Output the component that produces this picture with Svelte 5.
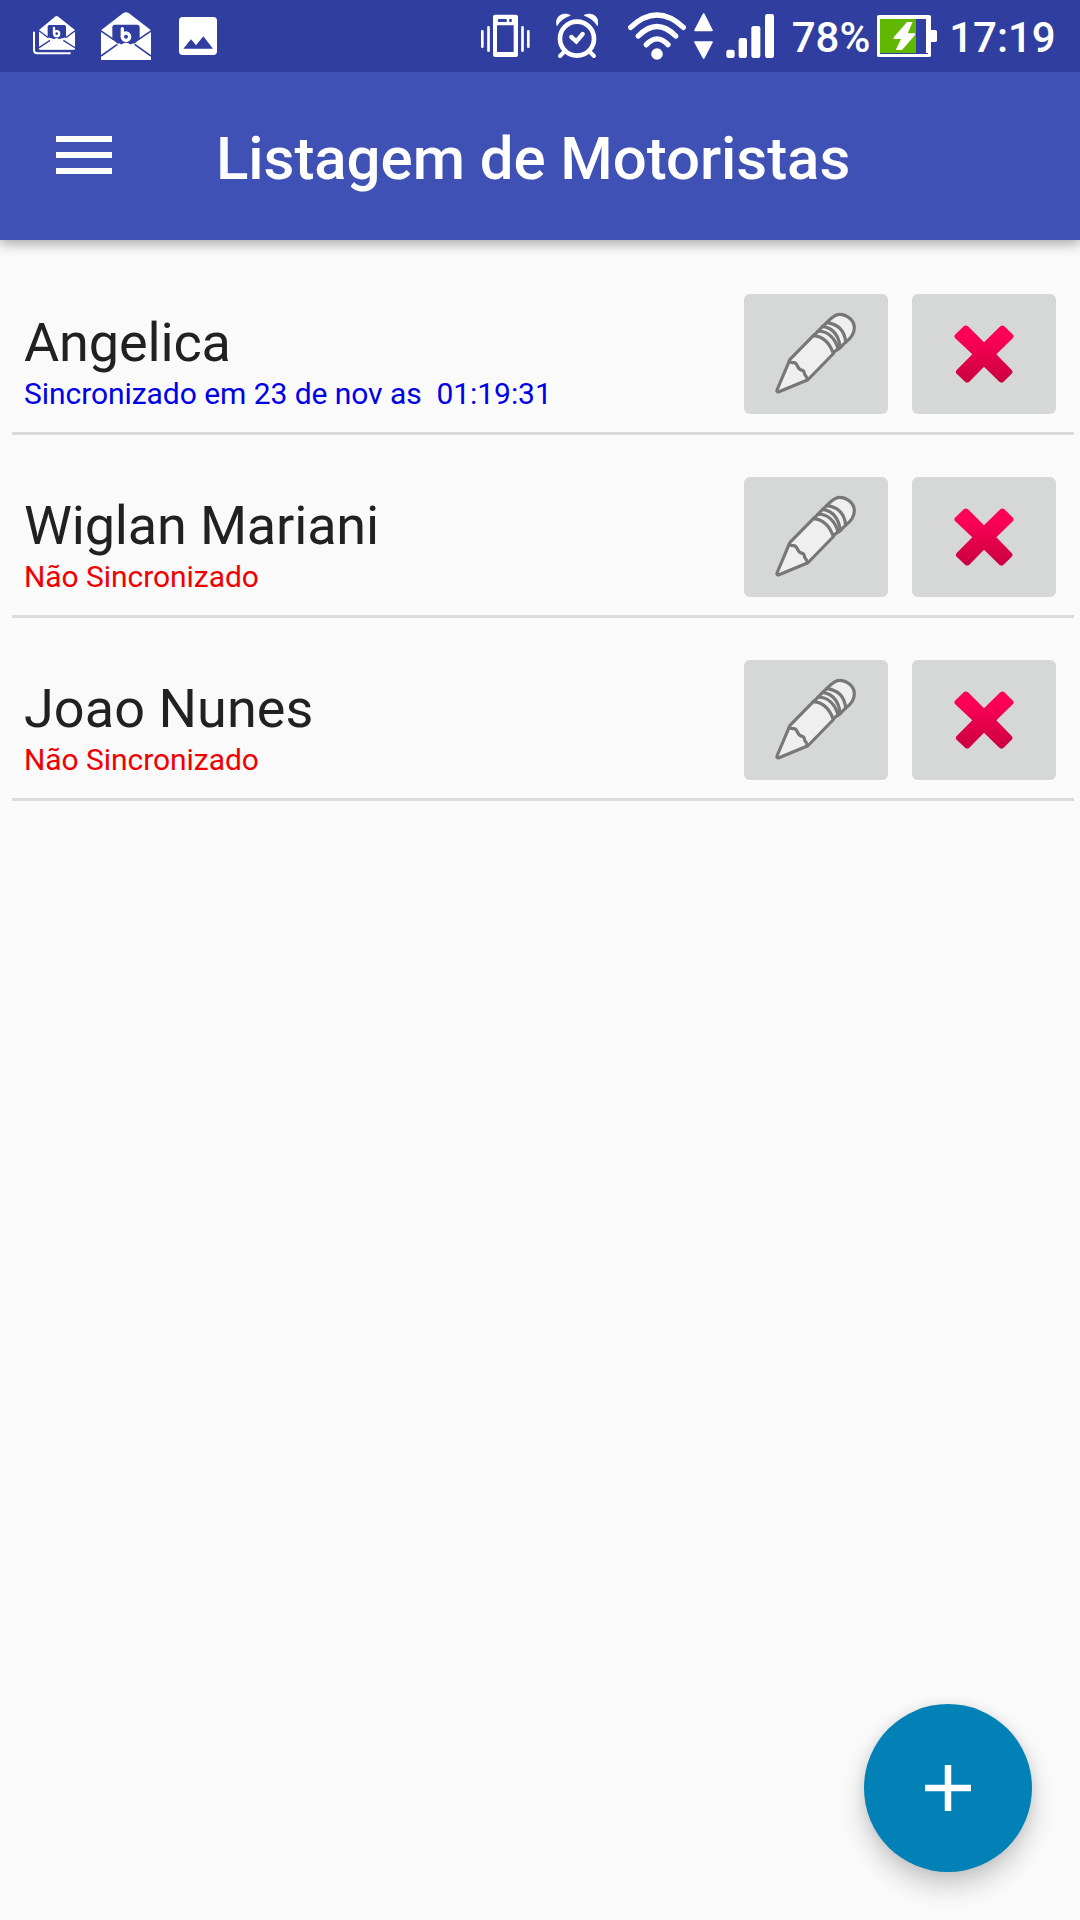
<script>
  const drivers = [
    { name: 'Angelica', status: 'Sincronizado em 23 de nov as\u00a0 01:19:31', synced: true, tracking: -0.14 },
    { name: 'Wiglan Mariani', status: 'Não Sincronizado', synced: false, tracking: -0.17 },
    { name: 'Joao Nunes', status: 'Não Sincronizado', synced: false, tracking: 0.07 },
  ];
</script>

<div class="screen">
  <div class="status-bar">
    <div class="notifications">
      <!-- stacked mail -->
      <svg class="mail-stack" viewBox="99 0 126 216" width="42" height="72">
        <path d="M102 95V150Q102 160 112 160H212" fill="none" stroke="#fff" stroke-width="6" />
        <path d="M117 90L165 50Q170 46 175 50L225 90V148H117Z" fill="#fff" />
        <path d="M143 112V80Q143 75 148 75H193Q198 75 198 80V112L170 119Z" fill="#303f9f" />
        <path d="M115 91L145 113M227 91L197 113M117 143L150 121M225 143L190 121" stroke="#303f9f" stroke-width="4" />
        <path d="M117 149L165 116Q170 112 175 116L225 149Z" fill="#fff" />
        <path d="M162 84V101" stroke="#fff" stroke-width="7" stroke-linecap="round" />
        <circle cx="170" cy="101" r="7.500" fill="none" stroke="#fff" stroke-width="7" />
      </svg>
      <!-- mail -->
      <svg class="mail" viewBox="303 0 150 216" width="50" height="72">
        <path d="M303 91L370 39Q378 34 386 39L453 91V180H303Z" fill="#fff" />
        <path d="M337 118V82Q337 74 345 74H411Q419 74 419 82V118L378 142Z" fill="#303f9f" />
        <path d="M301 92L340 118M455 92L416 118M303 168L352 133M453 168L404 133M338 116L356 130M418 116L400 130" stroke="#303f9f" stroke-width="5" />
        <path d="M303 173L368 131Q378 126 388 131L453 173V180H303Z" fill="#fff" />
        <path d="M367 86V110" stroke="#fff" stroke-width="10" stroke-linecap="round" />
        <circle cx="378" cy="110" r="11" fill="none" stroke="#fff" stroke-width="10" />
      </svg>
      <!-- picture -->
      <svg class="picture" viewBox="537 0 114 216" width="38" height="72">
        <rect x="537" y="51" width="114" height="114" rx="11" fill="#fff" />
        <path d="M550 146L573 118L588 136L610 109L639 146Z" fill="#303f9f" />
      </svg>
    </div>
    <div class="system">
      <!-- vibrate -->
      <svg class="vibrate" viewBox="60 0 150 216" width="50" height="72">
        <path fill-rule="evenodd" fill="#fff" d="M105 44H168Q174 44 174 50V165Q174 171 168 171H105Q99 171 99 165V50Q99 44 105 44ZM111 76V156H161V76ZM117 57Q113 57 113 61.500T117 66H137Q141 66 141 61.500T137 57ZM151 56Q147 56 147 61.500T151 67Q156 67 156 61.500T151 56Z" />
        <path d="M67 94V140M85.500 82V152M187.500 82V152M205 94V140" stroke="#fff" stroke-width="8" stroke-linecap="round" />
      </svg>
      <!-- alarm -->
      <svg class="alarm" viewBox="287 0 126 216" width="42" height="72">
        <circle cx="350" cy="116" r="51" fill="none" stroke="#fff" stroke-width="14" />
        <path d="M290 77C282 52 306 34 330 46Q302 56 290 77ZM411 77C420 52 395 34 371 46Q399 56 411 77Z" fill="#fff" stroke="#fff" stroke-width="2" />
        <path d="M311 156L299 168M389 156L401 168" stroke="#fff" stroke-width="12" stroke-linecap="round" />
        <path d="M333 111L348 124L367 102" fill="none" stroke="#fff" stroke-width="13" stroke-linecap="round" />
      </svg>
      <!-- wifi -->
      <svg class="wifi" viewBox="504 0 174 216" width="58" height="72">
        <g fill="none" stroke="#fff" stroke-width="16" stroke-linecap="round">
          <path d="M512 82Q591 8 670 82" />
          <path d="M535 108Q591 51 647 108" />
          <path d="M559 134Q591 99 624 134" />
        </g>
        <circle cx="591" cy="162" r="17.500" fill="#fff" />
      </svg>
      <!-- data arrows -->
      <svg class="arrows" viewBox="702 0 57 216" width="19" height="72">
        <path d="M731 42L756 91H705ZM705 126H756L731 174Z" fill="#fff" stroke="#fff" stroke-width="5" stroke-linejoin="round" />
      </svg>
      <!-- signal -->
      <svg class="signal" viewBox="798 0 144 216" width="48" height="72">
        <g fill="#fff">
          <rect x="799" y="149" width="25" height="25" rx="7" />
          <rect x="836" y="114" width="25" height="60" rx="7" />
          <rect x="874" y="78" width="27" height="96" rx="7" />
          <rect x="915" y="42" width="27" height="132" rx="7" />
        </g>
      </svg>
      <span class="percent">78%</span>
      <!-- charging battery -->
      <svg class="battery" viewBox="321 0 180 216" width="60" height="72">
        <rect x="325.500" y="49.500" width="153" height="117" rx="1" fill="none" stroke="#fff" stroke-width="9" />
        <rect x="330" y="57" width="108" height="102" fill="#61b800" />
        <rect x="330" y="54" width="144" height="3" fill="#fff" />
        <rect x="468" y="57" width="6" height="102" fill="#fff" />
        <path d="M480 90H496Q501 90 501 95V121Q501 126 496 126H480Z" fill="#fff" />
        <path d="M411 66H428L413 100H435V105L396 150H377L393 117H371V112Z" fill="#fff" />
      </svg>
      <span class="clock">17:19</span>
    </div>
  </div>

  <header>
    <button class="menu" aria-label="Menu"><i></i><i></i><i></i></button>
    <h1>Listagem de Motoristas</h1>
  </header>

  <main>
    {#each drivers as driver}
      <div class="row">
        <div class="info">
          <div class="name" style:letter-spacing="{driver.tracking}px">{driver.name}</div>
          <div class="sync" class:synced={driver.synced}>{driver.status}</div>
        </div>
        <button class="action" aria-label="Editar">
          <svg viewBox="42 42 432 360" width="144" height="120">
            <g fill="#efefef" stroke="#777" stroke-width="9.500" stroke-linejoin="round" stroke-linecap="round">
              <path d="M177 245L141 330Q139 337 147 335L232 300L236 297L309 222L314 214L331 203L347 186C358 178 373 163 373 143C373 121 351 103 328 103Q313 103 290 128L275 142L259 159L250 167L180 238Z" />
              <path d="M177 245L188 248Q198 246 202 258Q208 270 217 271Q223 273 224 283Q231 290 232 300" fill="none" />
              <path d="M250 167Q291 170 309 218M263 154C293 152 316 175 324 207M278 139Q323 146 331 202M290 128C323 132 344 151 347 187" fill="none" />
            </g>
          </svg>
        </button>
        <button class="action" aria-label="Excluir">
          <svg viewBox="546 42 432 360" width="144" height="120">
            <defs>
              <linearGradient id="cross" x1="0" y1="136" x2="0" y2="309" gradientUnits="userSpaceOnUse">
                <stop offset="0.15" stop-color="#ff0057" />
                <stop offset="1" stop-color="#c9003f" />
              </linearGradient>
            </defs>
            <path class="cross" d="M702 138Q708 134 714 139L762 187L811 139Q817 134 823 139L849 164Q853 169 849 174L799 223L845 270Q850 276 845 281L820 306Q814 310 808 305L762 260L718 305Q712 310 706 306L680 281Q675 276 680 270L727 223L675 174Q671 169 675 164Z" fill="url(#cross)" />
          </svg>
        </button>
      </div>
    {/each}
  </main>

  <button class="fab" aria-label="Adicionar">
    <svg viewBox="0 0 168 168" width="168" height="168">
      <path d="M61 84H107M84 61V107" stroke="#fff" stroke-width="6.500" />
    </svg>
  </button>
</div>

<style>
  :global(body) {
    margin: 0;
    background: #fafafa;
  }
  .screen {
    position: relative;
    width: 1080px;
    height: 1920px;
    overflow: hidden;
    background: #fafafa;
    font-family: Roboto, sans-serif;
  }
  svg {
    display: block;
    flex: none;
  }
  button {
    padding: 0;
    border: 0;
    flex: none;
  }
  .status-bar {
    position: relative;
    z-index: 1;
    display: flex;
    justify-content: space-between;
    height: 72px;
    background: #303f9f;
    color: #fff;
  }
  .notifications,
  .system {
    display: flex;
  }
  .notifications {
    padding-left: 33px;
  }
  .mail { margin-left: 26px; }
  .picture { margin-left: 28px; }
  .system { width: 600px; }
  .alarm { margin-left: 25.67px; }
  .wifi { margin-left: 30px; }
  .arrows { margin-left: 8px; }
  .signal { margin-left: 13px; }
  .percent,
  .clock {
    font-size: 42px;
    font-weight: 500;
    line-height: 76px;
    white-space: nowrap;
  }
  .percent {
    width: 85px;
    margin-left: 18px;
  }
  .clock {
    margin-left: 12.5px;
  }
  header {
    position: relative;
    display: flex;
    align-items: center;
    height: 168px;
    padding-left: 56px;
    background: #3f51b5;
    box-shadow: 0 4px 12px rgba(0, 0, 0, 0.33);
  }
  .menu {
    display: flex;
    flex-direction: column;
    gap: 10px;
    width: 56px;
    margin-bottom: 25px;
    margin-top: 23px;
    background: none;
  }
  .menu i {
    width: 56px;
    height: 6px;
    background: #fff;
  }
  h1 {
    margin: 6px 0 0 104px;
    color: #fff;
    font-size: 60px;
    font-weight: 500;
    letter-spacing: -0.06px;
    line-height: 70px;
    white-space: nowrap;
  }
  main {
    padding: 12px 6px 0 12px;
  }
  .row {
    display: flex;
    box-sizing: border-box;
    height: 183px;
    padding: 42px 18px 0 12px;
    gap: 24px;
    border-bottom: 3px solid #dbdbdb;
  }
  .info {
    flex: 1;
    padding-top: 17px;
  }
  .name {
    color: #212121;
    font-size: 54px;
    line-height: 64px;
    white-space: nowrap;
  }
  .sync {
    color: #f00000;
    font-size: 30px;
    letter-spacing: -0.055px;
    line-height: 38px;
    white-space: nowrap;
  }
  .sync.synced {
    color: #0000e6;
  }
  .action {
    width: 144px;
    height: 120px;
    border-radius: 6px;
    background: #d6d7d7;
  }
  .cross {
    filter: blur(1.5px);
  }
  .fab {
    position: absolute;
    right: 48px;
    bottom: 48px;
    width: 168px;
    height: 168px;
    border-radius: 50%;
    background: #0281b7;
    box-shadow: 0 14px 26px rgba(0, 0, 0, 0.2), 0 0 12px rgba(0, 0, 0, 0.08);
  }
</style>
